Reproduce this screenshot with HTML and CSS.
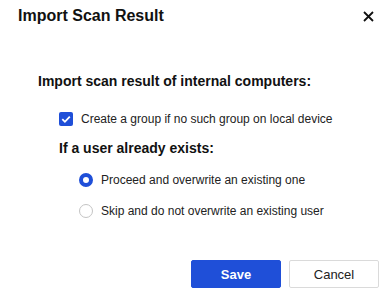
FILE: index.html
```html
<!DOCTYPE html>
<html lang="en">
<head>
    <meta charset="UTF-8">
    <title>Import Scan Result</title>
    <link rel="stylesheet" href="styles.css">
</head>
<body>
    <!-- dialog -->
    <div class="dialog">
        <div class="header">
            <h1 class="title">Import Scan Result</h1>
            <span class="close">
                <svg width="11" height="11" viewBox="0 0 11 11"><path d="M1 1L10 10M10 1L1 10" stroke="#111" stroke-width="1.8" fill="none"/></svg>
            </span>
        </div>

        <div class="content">
            <h2 class="section-title">Import scan result of internal computers:</h2>
            <label class="row check-row">
                <span class="checkbox checked">
                    <svg width="14" height="14" viewBox="0 0 14 14"><path d="M3.3 7.2L5.9 9.8L10.8 4.6" stroke="#fff" stroke-width="1.8" fill="none"/></svg>
                </span>
                Create a group if no such group on local device
            </label>

            <h3 class="sub-title">If a user already exists:</h3>
            <label class="row radio-row first">
                <span class="radio checked"></span>
                Proceed and overwrite an existing one
            </label>
            <label class="row radio-row second">
                <span class="radio"></span>
                Skip and do not overwrite an existing user
            </label>
        </div>

        <div class="footer">
            <button type="button" class="btn primary">Save</button>
            <button type="button" class="btn">Cancel</button>
        </div>
    </div>
</body>
</html>
```

FILE: styles.css
```css
*{
    margin: 0;
    padding: 0;
    box-sizing: border-box;
}
body{
    font-family: "Liberation Sans", Arial, sans-serif;
    background: #fff;
    color: #1a1a1a;
    width: 392px;
    height: 291px;
    overflow: hidden;
}
.header{
    display: flex;
    align-items: center;
    justify-content: space-between;
    height: 32px;
    padding: 0 18px 0 18px;
}
.title{
    font-size: 16px;
    font-weight: bold;
    line-height: 32px;
    color: #111;
}
.close{
    display: flex;
    width: 11px;
    height: 11px;
    margin-top: 1px;
}
.content{
    padding: 39px 0 0 38px;
}
.section-title{
    font-size: 14px;
    font-weight: bold;
    line-height: 20px;
    color: #111;
}
.row{
    display: flex;
    align-items: center;
    font-size: 12px;
    line-height: 20px;
    color: #222;
}
.check-row{
    margin: 18px 0 0 21px;
}
.checkbox{
    display: flex;
    width: 14px;
    height: 14px;
    margin-right: 8px;
    border-radius: 2px;
    background: #1f4fd8;
}
.sub-title{
    margin: 9px 0 0 21px;
    font-size: 14px;
    font-weight: bold;
    line-height: 20px;
    color: #111;
}
.radio-row{
    margin-left: 41px;
}
.radio-row.first{
    margin-top: 12px;
}
.radio-row.second{
    margin-top: 11px;
}
.radio{
    width: 14px;
    height: 14px;
    margin-right: 8px;
    border-radius: 50%;
    border: 1px solid #c4c4c4;
    background: #fff;
}
.radio.checked{
    border: 4px solid #1f4fd8;
}
.footer{
    display: flex;
    justify-content: flex-end;
    gap: 8px;
    padding: 0 13px 0 0;
    margin-top: 39px;
}
.btn{
    width: 90px;
    height: 28px;
    font-family: "Liberation Sans", Arial, sans-serif;
    font-size: 13px;
    color: #222;
    background: #fff;
    border: 1px solid #dadada;
    border-radius: 2px;
}
.btn.primary{
    color: #fff;
    font-weight: bold;
    background: #1f4fd8;
    border-color: #1f4fd8;
}
```
